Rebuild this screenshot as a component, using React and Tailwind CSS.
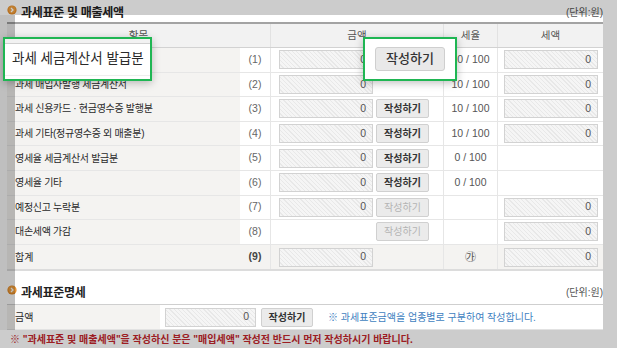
import React from "react";

const rows = [
  { label: "과세 세금계산서 발급분", no: "(1)", amount: true, btn: "on", rate: "10 / 100", tax: true },
  { label: "과세 매입자발행 세금계산서", no: "(2)", amount: true, btn: null, rate: "10 / 100", tax: true },
  { label: "과세 신용카드 · 현금영수증 발행분", no: "(3)", amount: true, btn: "on", rate: "10 / 100", tax: true },
  { label: "과세 기타(정규영수증 외 매출분)", no: "(4)", amount: true, btn: "on", rate: "10 / 100", tax: true },
  { label: "영세율 세금계산서 발급분", no: "(5)", amount: true, btn: "on", rate: "0 / 100", tax: false },
  { label: "영세율 기타", no: "(6)", amount: true, btn: "on", rate: "0 / 100", tax: false },
  { label: "예정신고 누락분", no: "(7)", amount: true, btn: "off", rate: "", tax: true },
  { label: "대손세액 가감", no: "(8)", amount: false, btn: "off", rate: "", tax: true },
];

const Bullet = () => (
  <svg width="10" height="10" viewBox="0 0 10 10" className="shrink-0 -mt-[5px]">
    <circle cx="5" cy="5" r="4.6" fill="#e48a25" />
    <circle cx="5" cy="4.6" r="3.6" fill="#f0a040" />
    <path d="M4 3 L6 5 L4 7" stroke="#fff" strokeWidth="1.3" fill="none" />
  </svg>
);

const ZeroInput = ({ w = "w-[94px]" }) => (
  <div
    className={`${w} h-[19px] border border-[#d2d2d2] bg-[image:repeating-linear-gradient(45deg,#f5f5f5_0px,#f5f5f5_2px,#e8e8e8_2px,#e8e8e8_3px)] flex items-center justify-end pr-[6px] text-[10.5px] text-[#555]`}
  >
    0
  </div>
);

const WriteBtn = ({ off, w = "w-[53px]" }) => (
  <div
    className={`${w} h-[19px] rounded-[2px] border border-[#d0d0d0] bg-[#ebebeb] flex items-center justify-center text-[10px] ${
      off ? "text-[#b4b4b4]" : "font-bold text-[#333]"
    }`}
  >
    작성하기
  </div>
);

const Row = ({ r }) => (
  <div className="flex h-[24.6px] border-b border-[#e6e6e6]">
    <div className="w-[233px] bg-[#f4f3f1] flex items-center pl-[8px] text-[10px] tracking-[-0.3px] text-[#2a2a2a]">
      {r.label}
    </div>
    <div className="w-[30px] flex items-center justify-center text-[10.5px] text-[#666]">{r.no}</div>
    <div className="w-[173px] border-l border-[#e6e6e6] flex items-center pl-[8px] gap-[3px]">
      {r.amount ? <ZeroInput /> : <div className="w-[94px]" />}
      {r.btn && <WriteBtn off={r.btn === "off"} />}
    </div>
    <div className="w-[54px] border-l border-[#e6e6e6] flex items-center justify-center text-[10.5px] text-[#555]">
      {r.rate}
    </div>
    <div className="w-[106px] border-l border-[#e6e6e6] flex items-center pl-[6px]">
      {r.tax && <ZeroInput />}
    </div>
  </div>
);

export default function App() {
  return (
    <div className="relative w-[617px] h-[348px] overflow-hidden bg-white font-['Liberation_Sans','Noto_Sans_CJK_KR',sans-serif]">
      <div className="pl-[7px] w-[603px]">
        {/* 과세표준 및 매출세액 */}
        <div className="h-[22px] pt-[3px] flex items-center justify-between">
          <div className="flex items-center gap-[4px]">
            <Bullet />
            <span className="text-[12px] font-bold text-[#222] tracking-[-0.3px]">과세표준 및 매출세액</span>
          </div>
          <span className="text-[10px] text-[#555]">(단위:원)</span>
        </div>

        <div className="border-t-2 border-[#a3a3a3] border-b-2 border-b-[#dcdcdc]">
          <div className="flex h-[24px] bg-[#f2f2f2] border-b border-[#d2d2d2] text-[10.5px] text-[#555]">
            <div className="w-[263px] flex items-center justify-center">항목</div>
            <div className="w-[173px] border-l border-[#e2e2e2] flex items-center justify-center">금액</div>
            <div className="w-[54px] border-l border-[#e2e2e2] flex items-center justify-center">세율</div>
            <div className="w-[106px] border-l border-[#e2e2e2] flex items-center justify-center">세액</div>
          </div>
          {rows.map((r, i) => (
            <Row key={i} r={r} />
          ))}
          <div className="flex h-[24.6px] bg-[#f4f3f1]">
            <div className="w-[233px] flex items-center pl-[8px] text-[10px] text-[#2a2a2a]">합계</div>
            <div className="w-[30px] flex items-center justify-center text-[10.5px] font-bold text-[#444]">(9)</div>
            <div className="w-[173px] border-l border-[#e6e6e6] flex items-center pl-[8px]">
              <ZeroInput />
            </div>
            <div className="w-[54px] border-l border-[#e6e6e6] flex items-center justify-center text-[11px] text-[#555]">
              ㉮
            </div>
            <div className="w-[106px] border-l border-[#e6e6e6] flex items-center pl-[6px]">
              <ZeroInput />
            </div>
          </div>
        </div>

        {/* 과세표준명세 */}
        <div className="h-[33px] pt-[10px] flex items-center justify-between">
          <div className="flex items-center gap-[4px]">
            <Bullet />
            <span className="text-[12px] font-bold text-[#222] tracking-[-0.3px]">과세표준명세</span>
          </div>
          <span className="text-[10px] text-[#555]">(단위:원)</span>
        </div>
        <div className="flex h-[26px] border-t border-[#cfcfcf] border-b border-b-[#e2e2e2]">
          <div className="w-[153px] bg-[#f4f3f1] flex items-center pl-[8px] text-[10px] text-[#2a2a2a]">금액</div>
          <div className="flex items-center pl-[5px] gap-[5px]">
            <ZeroInput w="w-[91px]" />
            <WriteBtn w="w-[52px]" />
            <span className="ml-[10px] text-[10px] text-[#3f7fbf]">
              ※ 과세표준금액을 업종별로 구분하여 작성합니다.
            </span>
          </div>
        </div>
        <div className="h-[18px] pl-[3px] flex items-center text-[10px] font-bold text-[#c4262c]">
          ※ "과세표준 및 매출세액"을 작성하신 분은 "매입세액" 작성전 반드시 먼저 작성하시기 바랍니다.
        </div>
      </div>

      {/* dim overlay around the spotlight */}
      <div className="absolute left-0 top-0 w-[617px] h-[15px] bg-black/20" />
      <div className="absolute left-0 top-[15px] w-[15px] h-[315px] bg-black/25" />
      <div className="absolute left-[603px] top-[15px] w-[14px] h-[315px] bg-black/20" />
      <div className="absolute left-0 top-[330px] w-[617px] h-[18px] bg-black/20" />

      {/* highlight callouts */}
      <div className="absolute left-[3px] top-[37px] w-[149px] h-[44px] border-2 border-[#1fb653] bg-white shadow-[0_2px_8px_rgba(0,0,0,0.25)] flex flex-col">
        <div className="h-[4px] bg-[#f2f2f2]" />
        <div className="h-[1px] bg-[#d0d0d0]" />
        <div className="h-[32px] flex items-center pl-[7px] text-[13.5px] text-[#2a2a2a] border-b border-[#eeeeee]">
          과세 세금계산서 발급분
        </div>
      </div>
      <div className="absolute left-[363px] top-[37px] w-[94px] h-[44px] border-2 border-[#1fb653] bg-white shadow-[0_2px_8px_rgba(0,0,0,0.25)] flex items-center justify-center">
        <div className="w-[70px] h-[24px] rounded-[3px] border border-[#cfcfcf] bg-[#e9e9e9] flex items-center justify-center text-[13px] font-medium text-[#333]">
          작성하기
        </div>
      </div>
    </div>
  );
}
